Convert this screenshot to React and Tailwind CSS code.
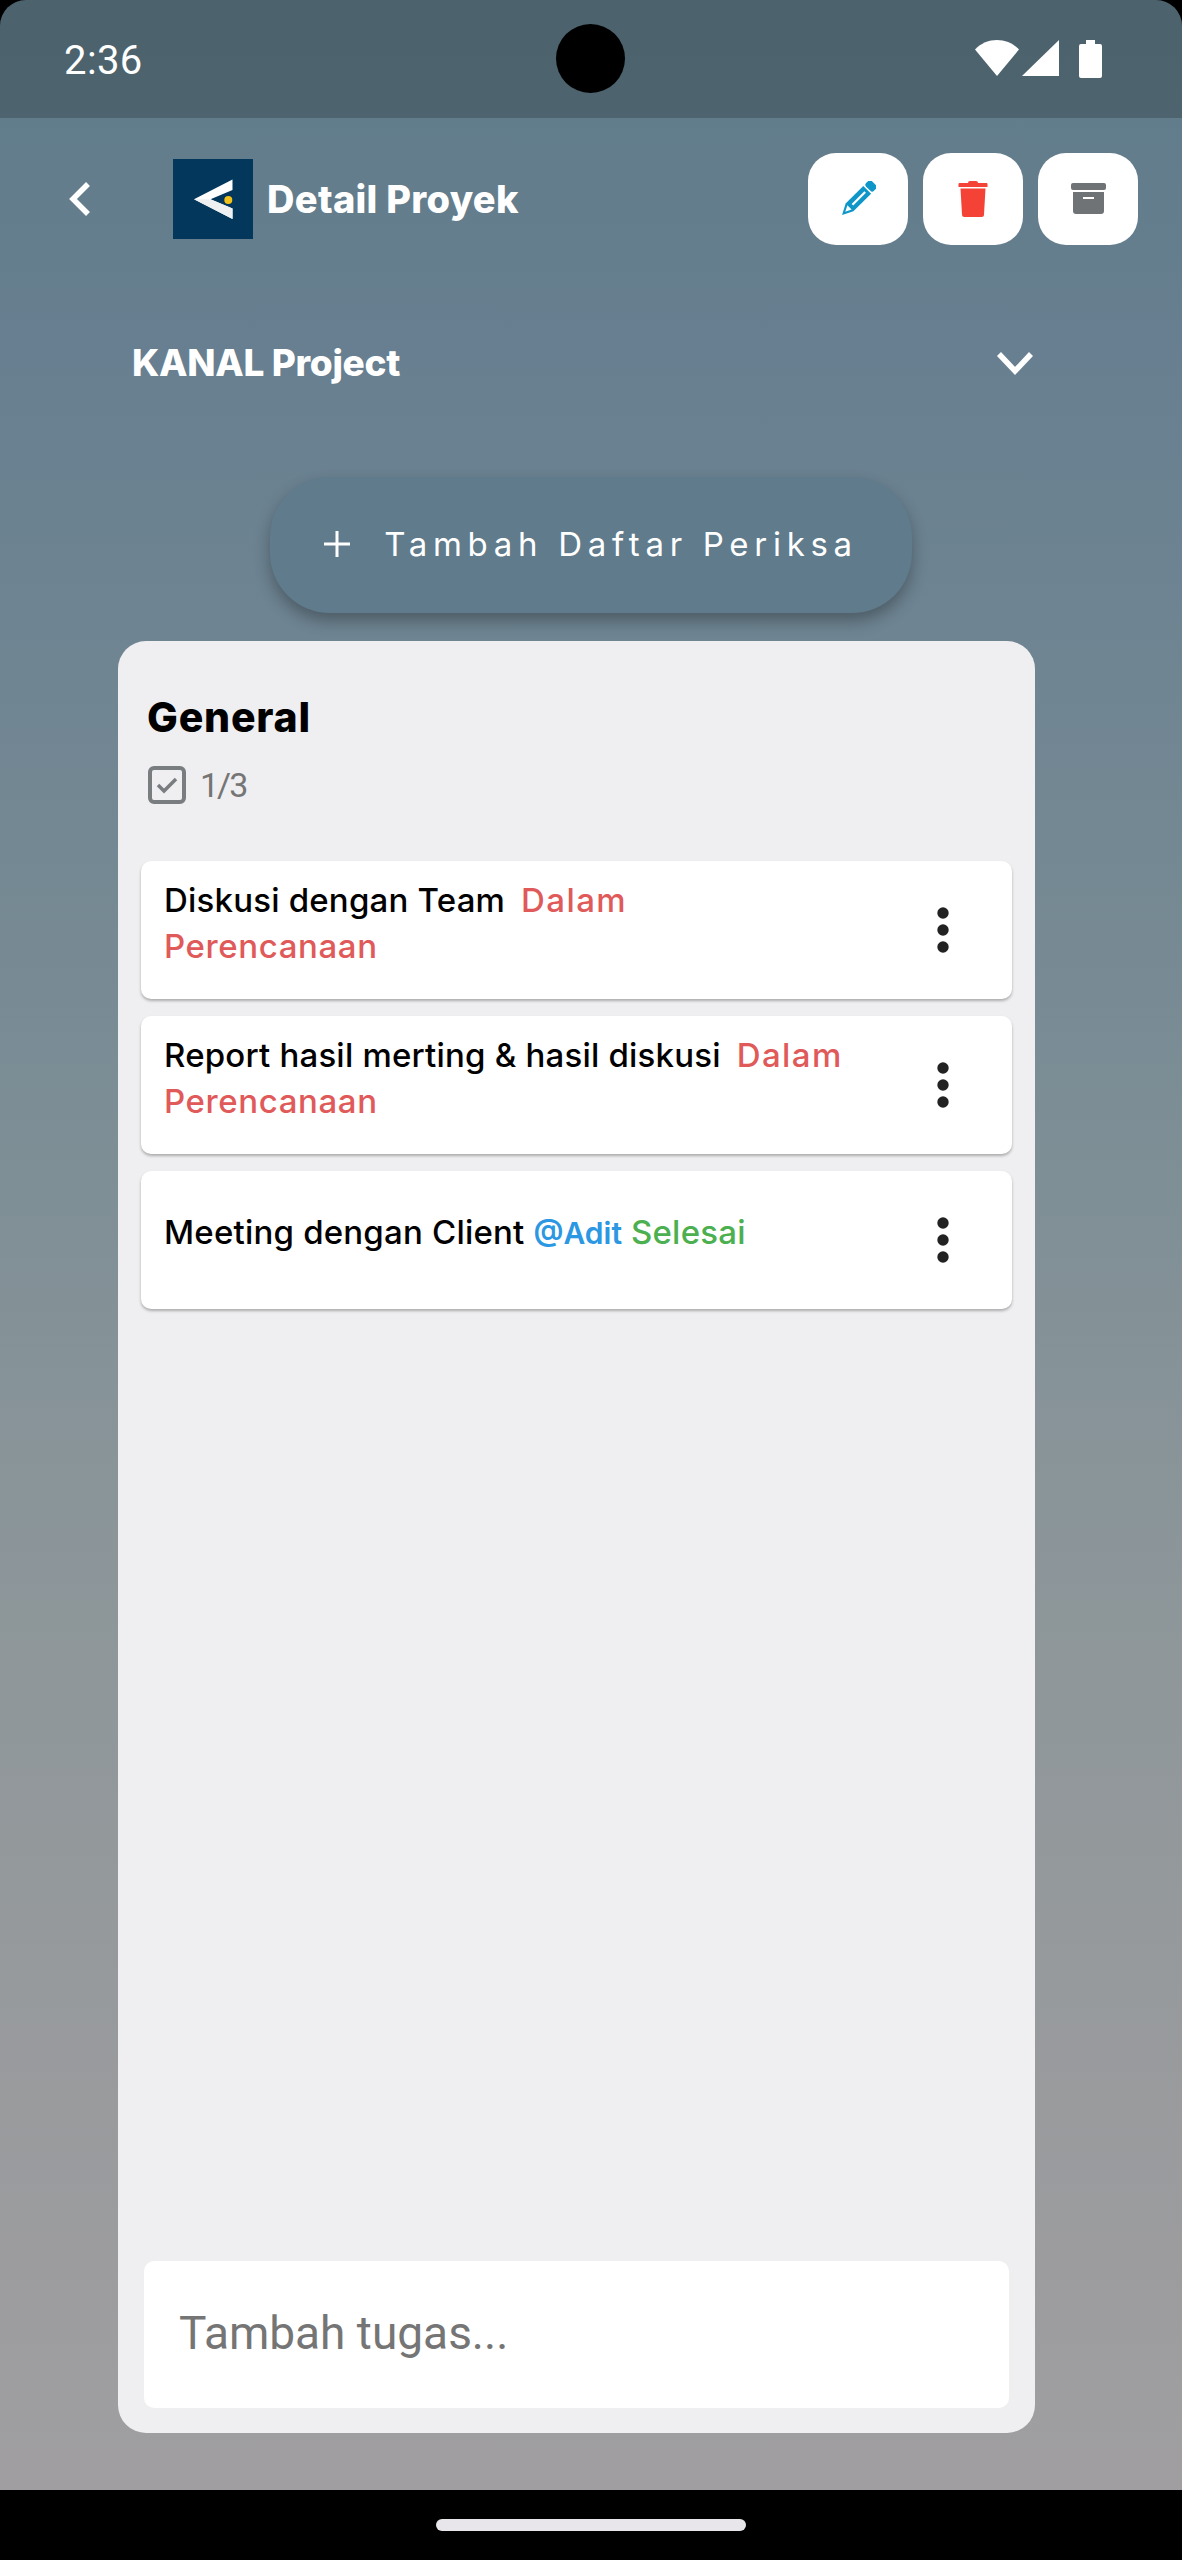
const poppins = "font-['Inter','Liberation_Sans',sans-serif]";

function TaskRow({ lines }) {
  return (
    <div className="flex h-[138px] items-center justify-between rounded-[10px] bg-white pl-[23px] pr-[63px] shadow-[0_2px_3px_rgba(0,0,0,0.28)]">
      <div className="whitespace-nowrap pb-[15px] text-[33px] font-medium leading-[46px] tracking-[0.2px] text-black">{lines}</div>
      <svg width="12" height="46" viewBox="0 0 12 46" className="shrink-0">
        <circle cx="6" cy="6" r="5.7" fill="#222" />
        <circle cx="6" cy="23" r="5.7" fill="#222" />
        <circle cx="6" cy="40" r="5.7" fill="#222" />
      </svg>
    </div>
  );
}

function IconButton({ children }) {
  return <button className="flex h-[92px] w-[100px] items-center justify-center rounded-[28px] bg-white">{children}</button>;
}

export default function App() {
  return (
    <div className={`flex h-[2560px] w-[1182px] flex-col overflow-hidden bg-black ${poppins}`}>
      <div className="flex flex-1 flex-col overflow-hidden rounded-t-[26px] bg-[linear-gradient(180deg,#5f7b88_0%,#677f90_14%,#788b94_40%,#8a9599_60%,#979a9c_80%,#a09ea1_100%)]">
        <div className="relative flex h-[118px] shrink-0 items-center justify-between bg-black/20 pl-[64px] pr-[80px]">
          <span className="pt-[4px] font-['Roboto',sans-serif] text-[40px] leading-none tracking-[0.4px] text-white">2:36</span>
          <div className="absolute left-[556px] top-[24px] h-[69px] w-[69px] rounded-full bg-black" />
          <svg width="127" height="38" viewBox="0 0 127 38" className="shrink-0">
            <path d="M0 9.5 C6 3 14 0 22 0 C30 0 38 3 44 9.5 L22 36 Z" fill="#fff" />
            <path d="M47 36 L84 0 V36 Z" fill="#fff" />
            <path d="M111 0 H120 V4 H125 A2 2 0 0 1 127 6 V36 A2 2 0 0 1 125 38 H106 A2 2 0 0 1 104 36 V6 A2 2 0 0 1 106 4 H111 Z" fill="#fff" />
          </svg>
        </div>

        <div className="flex flex-1 flex-col">
          <div className="mt-[35px] flex h-[92px] shrink-0 items-center pl-[68px] pr-[44px]">
            <svg width="24" height="36" viewBox="0 0 24 36" className="shrink-0">
              <path d="M20 3 L5 18 L20 33" fill="none" stroke="#fff" strokeWidth="5.5" />
            </svg>
            <svg width="80" height="80" viewBox="0 0 80 80" className="ml-[81px] shrink-0">
              <rect width="80" height="80" fill="#03375c" />
              <path d="M59.5 20.5 V31 L37.5 40.3 L59.5 49.5 V60 L21 40.3 Z" fill="#fff" />
              <path d="M21 40.3 L37.5 40.3 L59.5 49.5 V60 Z" fill="#eef0f2" />
              <circle cx="55.3" cy="41" r="4" fill="#f2c21b" />
            </svg>
            <span className="ml-[14px] text-[38px] font-extrabold leading-none tracking-[0.3px] text-white">Detail Proyek</span>
            <div className="ml-auto flex gap-[15px]">
              <IconButton>
                <svg width="36" height="36" viewBox="0 0 36 36" className="ml-[-1px]">
                  <g transform="rotate(45 18 18)">
                    <rect x="12.5" y="-4.5" width="11" height="8" rx="2.5" fill="#0e96c8" />
                    <path d="M12.5 5 H23.5 V30 L18 40.5 L12.5 30 Z" fill="#0e96c8" />
                    <path d="M15 30 H21 L18 36 Z" fill="#fff" />
                    <rect x="17" y="8" width="2.2" height="18" fill="#fff" />
                  </g>
                </svg>
              </IconButton>
              <IconButton>
                <svg width="30" height="36" viewBox="0 0 30 36">
                  <path d="M10 2 A2 2 0 0 1 12 0 H18 A2 2 0 0 1 20 2 H28.5 A1 1 0 0 1 29.5 3 V6 H0.5 V3 A1 1 0 0 1 1.5 2 Z" fill="#f44336" />
                  <path d="M2.5 7.5 H27.5 L26 33.5 A2.5 2.5 0 0 1 23.5 36 H6.5 A2.5 2.5 0 0 1 4 33.5 Z" fill="#f44336" />
                </svg>
              </IconButton>
              <IconButton>
                <svg width="35" height="32" viewBox="0 0 35 32">
                  <rect x="0" y="0" width="35" height="7" rx="2" fill="#6f7375" />
                  <path d="M2 9 H33 V28 A3 3 0 0 1 30 31 H5 A3 3 0 0 1 2 28 Z" fill="#6f7375" />
                  <rect x="12" y="14" width="11" height="2" fill="#fff" />
                </svg>
              </IconButton>
            </div>
          </div>

          <div className="flex h-[232px] shrink-0 items-center justify-between pl-[132px] pr-[148px] pt-[3px]">
            <span className="text-[37px] font-extrabold leading-none tracking-[-0.3px] text-white">KANAL Project</span>
            <svg width="38" height="26" viewBox="0 0 38 26" className="mt-[2px] shrink-0">
              <path d="M3 3 L19 20 L35 3" fill="none" stroke="#fff" strokeWidth="5.5" />
            </svg>
          </div>

          <div className="flex justify-center">
            <button className="flex h-[136px] w-[642px] items-center justify-center gap-[34px] rounded-[60px] bg-[#5f7b8c] pb-[2px] text-white shadow-[0_8px_16px_rgba(0,0,0,0.3)]">
              <svg width="26" height="26" viewBox="0 0 26 26" className="shrink-0">
                <path d="M13 0 V26 M0 13 H26" stroke="#fff" strokeWidth="3" />
              </svg>
              <span className="text-[33px] font-normal leading-none tracking-[5.7px]">Tambah Daftar Periksa</span>
            </button>
          </div>

          <div className="relative ml-[118px] mr-[147px] mt-[28px] mb-[57px] flex flex-1 flex-col rounded-[28px] bg-[#efeef0]">
            <h1 className="ml-[29px] mt-[56px] text-[41px] font-extrabold leading-[40px] tracking-[0.8px] text-black">General</h1>
            <div className="ml-[30px] mt-[29px] flex h-[38px] items-center gap-[14px]">
              <svg width="38" height="38" viewBox="0 0 38 38" className="shrink-0">
                <rect x="2" y="2" width="34" height="34" rx="4" fill="none" stroke="#7a7d80" strokeWidth="4" />
                <path d="M10 19 L16 25 L28 13" fill="none" stroke="#7a7d80" strokeWidth="3.5" />
              </svg>
              <span className="font-['Roboto',sans-serif] text-[34px] leading-none tracking-[-2px] text-[#757575]">1/3</span>
            </div>

            <div className="mx-[23px] mt-[57px] flex flex-col gap-[17px]">
              <TaskRow
                lines={
                  <>
                    Diskusi dengan Team<span className="ml-[16px] tracking-[1.4px] text-[#e05a5a]">Dalam</span>
                    <br />
                    <span className="tracking-[0.6px] text-[#e05a5a]">Perencanaan</span>
                  </>
                }
              />
              <TaskRow
                lines={
                  <>
                    Report hasil merting &amp; hasil diskusi<span className="ml-[16px] tracking-[1.4px] text-[#e05a5a]">Dalam</span>
                    <br />
                    <span className="tracking-[0.6px] text-[#e05a5a]">Perencanaan</span>
                  </>
                }
              />
              <TaskRow
                lines={
                  <>
                    Meeting dengan Client <span className="text-[30px] font-semibold tracking-[0px] text-[#2c97e2]">@Adit</span>{" "}
                    <span className="text-[#4caf50]">Selesai</span>
                  </>
                }
              />
            </div>

            <div className="mx-[26px] mb-[25px] mt-auto flex h-[147px] items-center rounded-[10px] bg-white pb-[4px] pl-[35px]">
              <span className="font-['Roboto',sans-serif] text-[46px] leading-none text-[#757575]">Tambah tugas...</span>
            </div>
          </div>
        </div>
      </div>

      <div className="flex h-[70px] shrink-0 items-start justify-center bg-black pt-[29px]">
        <div className="h-[12px] w-[310px] rounded-full bg-[#e8e6ea]" />
      </div>
    </div>
  );
}
